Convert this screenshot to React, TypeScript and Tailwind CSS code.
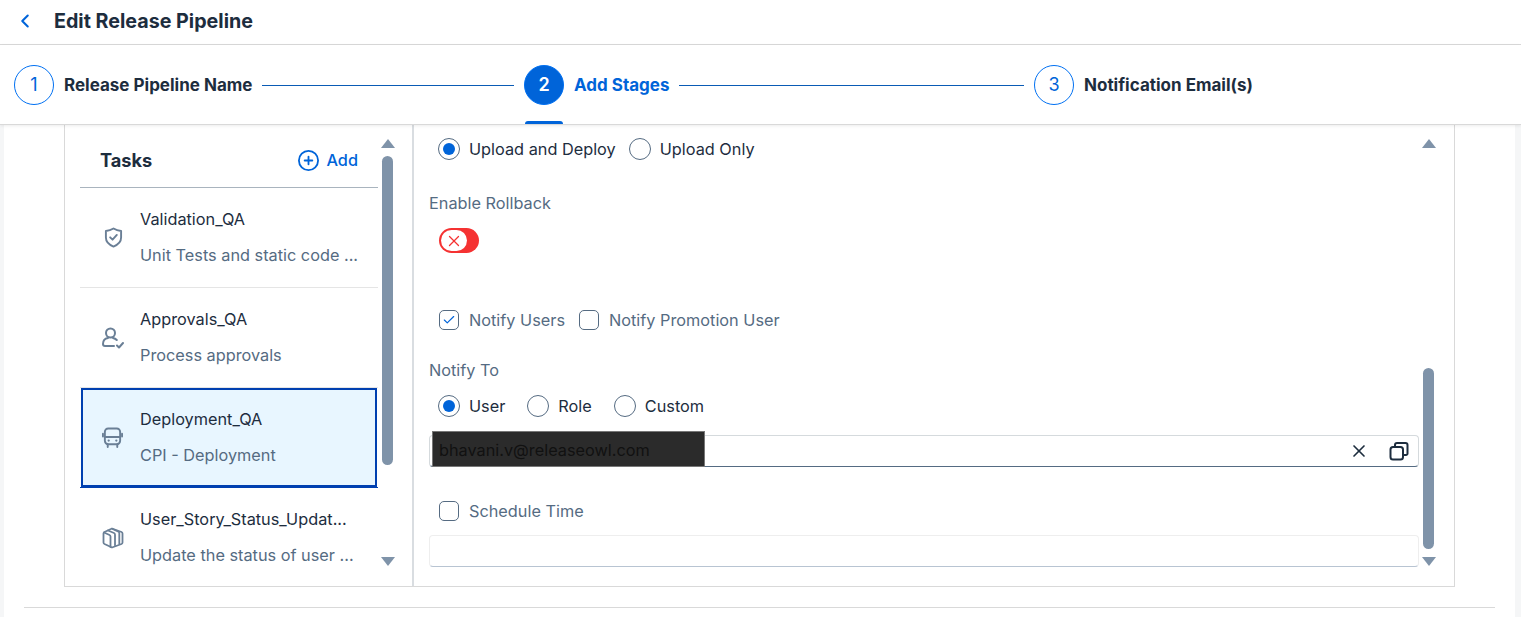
import React from "react";
import { ChevronLeft, CirclePlus, X, Check } from "lucide-react";

const ShieldIcon = ({ className }: { className?: string }) => (
  <svg viewBox="0 0 20 22" fill="none" stroke="currentColor" strokeWidth={2} strokeLinecap="round" strokeLinejoin="round" className={className}>
    <path d="M10 1.500c2.500 1.600 5 2.400 8 2.600v7c0 4.400-3.200 7.600-8 9.400-4.800-1.800-8-5-8-9.400v-7c3-.2 5.500-1 8-2.600z" />
    <path d="M6.500 10.800l2.500 2.500 4.500-5" />
  </svg>
);

const PersonCheckIcon = ({ className }: { className?: string }) => (
  <svg viewBox="0 0 22 22" fill="none" stroke="currentColor" strokeWidth={2} strokeLinecap="round" strokeLinejoin="round" className={className}>
    <circle cx="8.500" cy="6" r="4.500" />
    <path d="M6 11C3 11.500 1 14 1 17a2 2 0 0 0 2 2h9M11 11c1.500.3 2.800 1 3.800 2" />
    <path d="M15 18.500l2 2 4-4.500" />
  </svg>
);

const BusIcon = ({ className }: { className?: string }) => (
  <svg viewBox="0 0 22 22" fill="none" stroke="currentColor" strokeWidth={2} strokeLinecap="round" strokeLinejoin="round" className={className}>
    <rect x="3" y="1.500" width="16" height="16.500" rx="3.500" />
    <path d="M3 10.500h16M1 7v3M21 7v3M6 18v3M16 18v3" />
    <path d="M7 14.200h.01M15 14.200h.01" strokeWidth={2.400} />
  </svg>
);

const PackageIcon = ({ className }: { className?: string }) => (
  <svg viewBox="0 0 22 22" fill="none" stroke="currentColor" strokeWidth={1.8} strokeLinecap="round" strokeLinejoin="round" className={className}>
    <path d="M10 1.500l9.500 3.500c.6.300 1 .8 1 1.500v9c0 .7-.4 1.200-1 1.500l-9.500 3.500-7.500-3.500c-.6-.3-1-.8-1-1.500v-9c0-.7.4-1.200 1-1.500z" />
    <path d="M2 5.500l5.500 2.500c.6.300 1 .8 1 1.500v10.500" />
    <path d="M6 3.500l6 2.500c.6.300 1 1 1 1.800v10.500" />
    <path d="M10.500 2l5.500 2.500c.8.300 1.300 1 1.300 1.800v10.500" />
  </svg>
);

const CopyIcon = ({ className }: { className?: string }) => (
  <svg viewBox="0 0 20 20" fill="none" stroke="currentColor" strokeWidth={2} strokeLinejoin="round" strokeLinecap="round" className={className}>
    <rect x="1.500" y="6" width="12.500" height="12.500" rx="2.500" />
    <path d="M6 6V4a2 2 0 0 1 2-2h8.500a2 2 0 0 1 2 2v8.500a1.500 1.500 0 0 1-1.500 1.500H14" />
  </svg>
);

const Radio = ({ label, checked = false }: { label: string; checked?: boolean }) => (
  <div className="flex items-center gap-[9px]">
    <div className="h-[22px] w-[22px] rounded-full border border-[#556b82] flex items-center justify-center bg-white">
      {checked && <div className="h-[12px] w-[12px] rounded-full bg-[#0064d9]" />}
    </div>
    <span className="text-[#1d2d3e]">{label}</span>
  </div>
);

const CheckBox = ({ label, checked = false }: { label: string; checked?: boolean }) => (
  <div className="flex items-center gap-[10px]">
    <div className="h-[20px] w-[20px] rounded-[5px] border border-[#556b82] flex items-center justify-center bg-white">
      {checked && <Check className="h-3.5 w-3.5 text-[#0064d9]" strokeWidth={2} />}
    </div>
    <span className="text-[#556b82]">{label}</span>
  </div>
);

const Step = ({ n, label, active = false, last = false }: { n: number; label: string; active?: boolean; last?: boolean }) => (
  <div className="w-[510px] h-full flex items-center shrink-0">
    <div className="relative h-full flex items-center gap-[10px] shrink-0">
      <div
        className={`h-10 w-10 rounded-full border border-[#0070f2] flex items-center justify-center text-[18px] ${active ? "bg-[#0064d9] text-white font-semibold" : "bg-white text-[#0064d9]"}`}
      >
        {n}
      </div>
      <span className={`font-bold text-[17px] ${active ? "text-[#0064d9]" : "text-[#1d2d3e]"}`}>{label}</span>
      {active && <div className="absolute left-px bottom-0 h-[3px] w-[38px] rounded-t-[3px] bg-[#0064d9]" />}
    </div>
    {!last && <div className="mt-px mx-[10px] flex-1 h-px bg-[#0a5bb5]" />}
  </div>
);

const tasks = [
  { title: "Validation_QA", sub: "Unit Tests and static code ...", Icon: ShieldIcon, iconSize: "h-[21px] w-[19px] ml-px" },
  { title: "Approvals_QA", sub: "Process approvals", Icon: PersonCheckIcon, iconSize: "h-[22px] w-[22px] -ml-px" },
  { title: "Deployment_QA", sub: "CPI - Deployment", Icon: BusIcon, active: true, iconSize: "h-[21px] w-[21px]" },
  { title: "User_Story_Status_Updat...", sub: "Update the status of user ...", Icon: PackageIcon, iconSize: "h-[22px] w-[22px] -ml-px" },
];

const TaskText = ({ title, sub }: { title: string; sub: string }) => (
  <div className="flex flex-col gap-[14px] whitespace-nowrap pb-[2px]">
    <span className="text-[#1d2d3e]">{title}</span>
    <span className="text-[#556b82]">{sub}</span>
  </div>
);

export default function App() {
  return (
    <div className="h-[617px] w-[1521px] overflow-hidden bg-white text-[16.3px] leading-[22px] font-['Inter',sans-serif] flex flex-col">
      <div className="h-[45px] shrink-0 border-b border-[#d9d9d9] flex items-center pl-[14px] gap-[18px] pb-[3px]">
        <ChevronLeft className="h-[22px] w-[22px] text-[#0064d9]" strokeWidth={2.25} />
        <span className="text-[19.7px] font-bold text-[#1d2d3e]">Edit Release Pipeline</span>
      </div>
      <div className="h-[80px] shrink-0 border-b border-[#d9d9d9] flex items-center pl-[14px] shadow-[0_1px_3px_rgba(0,0,0,0.08)] relative">
        <Step n={1} label="Release Pipeline Name" />
        <Step n={2} label="Add Stages" active />
        <Step n={3} label="Notification Email(s)" last />
      </div>

      <div className="flex-1 flex flex-col px-[20px] border-l-[4px] border-r-[6px] border-[#f5f6f7] min-h-0">
        <div className="h-[462px] shrink-0 mx-[40px] border border-t-0 border-[#d9d9d9] flex">
          <div className="w-[349px] shrink-0 border-r-2 border-[#d9dde1] flex">
            <div className="w-[298px] ml-[15px] shrink-0">
              <div className="h-[63px] pt-[8px] border-b border-[#a9b4be] flex items-center justify-between pl-[20px] pr-[20px]">
                <span className="text-[18.2px] font-bold text-[#1d2d3e]">Tasks</span>
                <div className="flex items-center gap-[6px] text-[#0064d9] font-medium">
                  <CirclePlus className="h-[23px] w-[23px] -ml-[2px]" strokeWidth={1.9} />
                  <span>Add</span>
                </div>
              </div>
              {tasks.map(({ title, sub, Icon, active, iconSize }) =>
                active ? (
                  <div key={title} className="h-[100px] border-b border-[#0040b0]">
                    <div className="h-full mx-px bg-[#e8f6ff] border-2 border-[#0040b0] flex items-center">
                      <div className="w-[57px] pl-[19px] shrink-0 flex">
                        <Icon className={`${iconSize} text-[#6a7f96]`} />
                      </div>
                      <TaskText title={title} sub={sub} />
                    </div>
                  </div>
                ) : (
                  <div key={title} className="h-[100px] flex items-center border-b border-[#e5e5e5] last:border-b-0">
                    <div className="w-[60px] pl-[23px] shrink-0 flex">
                      <Icon className={`${iconSize} text-[#6a7f96]`} />
                    </div>
                    <TaskText title={title} sub={sub} />
                  </div>
                ),
              )}
            </div>
            <div className="w-[14px] ml-[3px] flex flex-col items-center pt-[14px] pb-[20px]">
              <div className="h-0 w-0 border-x-[7px] border-x-transparent border-b-[9px] border-b-[#7f93a9]" />
              <div className="mt-[8px] -ml-px h-[309px] w-[11px] rounded-full bg-[#7f93a9]" />
              <div className="mt-auto h-0 w-0 border-x-[7px] border-x-transparent border-t-[9px] border-t-[#7f93a9]" />
            </div>
          </div>

          <div className="flex-1 flex min-w-0">
            <div className="flex-1 min-w-0 pl-[15px] flex flex-col">
              <div className="mt-[13px] flex items-center gap-[13px] pl-[9px]">
                <Radio label="Upload and Deploy" checked />
                <Radio label="Upload Only" />
              </div>
              <span className="mt-[32px] text-[#556b82]">Enable Rollback</span>
              <div className="mt-[14px] ml-[10px] h-[25px] w-[40px] rounded-full bg-[#f53232] flex items-center pl-[2px]">
                <div className="h-[21px] w-[26px] rounded-full bg-white flex items-center justify-center">
                  <X className="h-[18px] w-[18px] text-[#f53232]" strokeWidth={1.75} />
                </div>
              </div>
              <div className="mt-[56px] flex items-center gap-[14px] pl-[10px]">
                <CheckBox label="Notify Users" checked />
                <CheckBox label="Notify Promotion User" />
              </div>
              <span className="mt-[28px] text-[#556b82]">Notify To</span>
              <div className="mt-[14px] flex items-center gap-[22px] pl-[9px]">
                <Radio label="User" checked />
                <Radio label="Role" />
                <Radio label="Custom" />
              </div>
              <div className="relative mt-[18px] h-[32px] rounded-[4px] border border-[#d5dadd] border-b-[#556b82] flex items-center justify-end gap-[20px] pr-[9px]">
                <div className="absolute left-[2px] top-[-5px] h-[36px] w-[273px] bg-[#2b2b2b] border border-[#777] flex items-center pl-[6px] pt-[2px] text-[#111]">
                  bhavani.v@releaseowl.com
                </div>
                <X className="h-5 w-5 text-[#1d2d3e]" strokeWidth={2} />
                <CopyIcon className="h-5 w-5 text-[#1d2d3e]" />
              </div>
              <div className="mt-[33px] pl-[10px]">
                <CheckBox label="Schedule Time" />
              </div>
              <div className="mt-[13px] h-[32px] rounded-[4px] border border-[#eeeeee] border-b-[#b8c4d2]" />
            </div>
            <div className="w-[35px] shrink-0 flex flex-col items-start pl-[3px] pt-[14px] pb-[20px]">
              <div className="h-0 w-0 border-x-[7px] border-x-transparent border-b-[9px] border-b-[#7f93a9]" />
              <div className="mt-auto ml-px h-[181px] w-[11px] rounded-full bg-[#7f93a9]" />
              <div className="mt-[8px] h-0 w-0 border-x-[7px] border-x-transparent border-t-[9px] border-t-[#7f93a9]" />
            </div>
          </div>
        </div>
        <div className="mt-[20px] h-px bg-[#d9d9d9]" />
      </div>
    </div>
  );
}
